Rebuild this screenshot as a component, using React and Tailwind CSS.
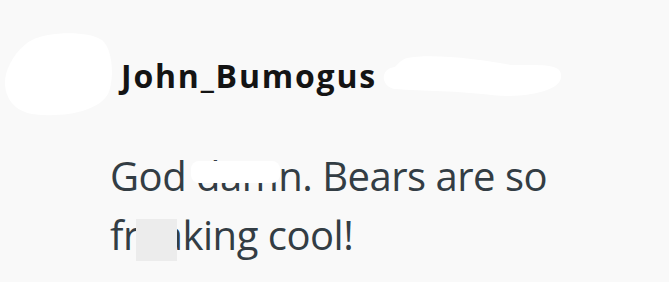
import React from "react";

function AvatarBlob() {
  return (
    <svg width="112" height="84" viewBox="0 0 112 84" className="shrink-0">
      <path
        d="M30 8 C45 0 85 -2 100 8 C112 18 112 50 106 62 C96 80 60 86 30 82 C8 78 0 60 4 42 C8 28 18 14 30 8 Z"
        fill="#ffffff"
      />
    </svg>
  );
}

function NameBlob() {
  return (
    <svg width="184" height="46" viewBox="0 0 184 46" className="shrink-0">
      <path
        d="M26 3 C50 -2 100 4 130 10 C160 10 182 8 180 22 C180 34 150 44 110 40 C80 36 40 36 14 34 C0 32 -2 14 14 12 C18 8 20 5 26 3 Z"
        fill="#ffffff"
      />
    </svg>
  );
}

export default function App() {
  return (
    <div className="w-[669px] h-[282px] bg-[#f9f9f9] overflow-hidden" style={{ fontFamily: '"Open Sans", "Noto Sans", sans-serif' }}>
      <div className="flex items-center pt-[32px] pl-[2px]">
        <AvatarBlob />
        <span className="ml-[7px] mt-[4px] text-[32px] font-bold text-[#141414] tracking-[1.8px] leading-none">John_Bumogus</span>
        <span className="ml-[4px] mt-[8px]"><NameBlob /></span>
      </div>
      <div className="pl-[110px] pt-[30px] text-[40px] leading-[59px] text-[#333d44] tracking-[-0.5px]">
        <div>
          God <span className="relative">
            dam
            <span className="absolute left-[-5px] right-[-2px] top-[13px] h-[22px] rounded-[8px] bg-white" />
          </span>n. Bears are so
        </div>
        <div>
          fr<span className="relative">ea<span className="absolute left-[-3px] w-[41px] top-[12px] h-[42px] bg-[#ececec]" /></span>king cool!
        </div>
      </div>
    </div>
  );
}
